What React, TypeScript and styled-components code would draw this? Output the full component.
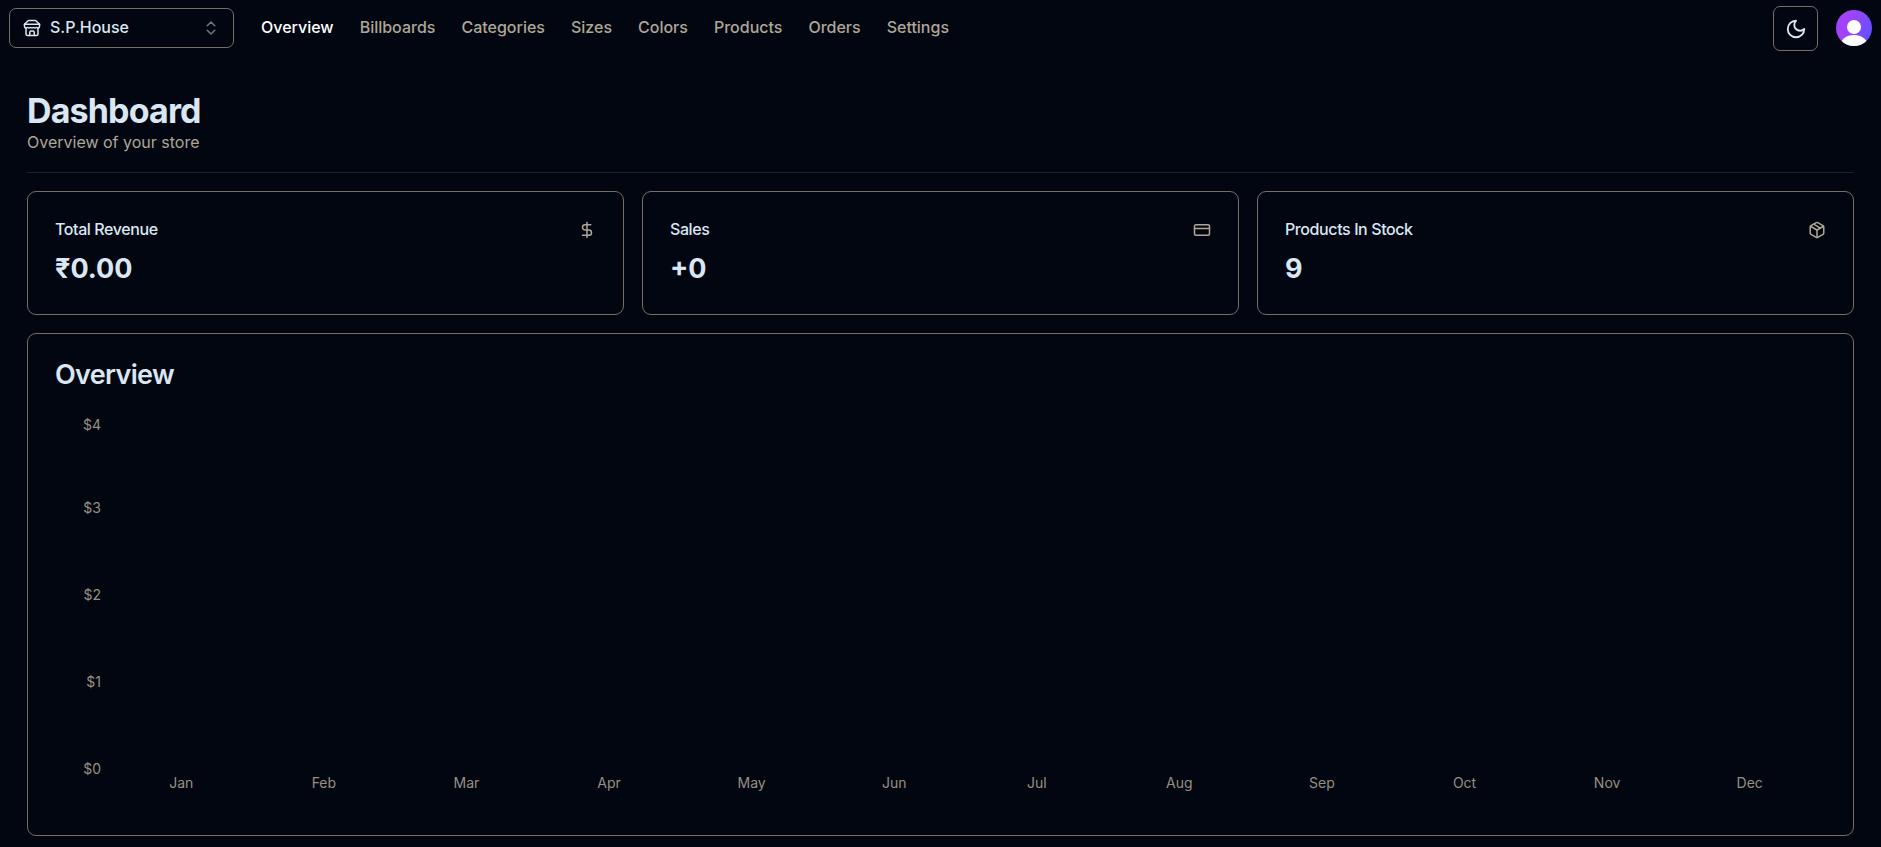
import React from "react";
import styled, { createGlobalStyle } from "styled-components";
import { ChevronsUpDown, CreditCard, DollarSign, Package } from "lucide-react";

const color = {
  background: "#020611",
  text: "#dbe6f3",
  active: "#ffffff",
  muted: "#afa696",
  axis: "#988f81",
  border: "#776e62",
  divider: "#1b1f2d",
};

const GlobalStyle = createGlobalStyle`
  *, *::before, *::after { box-sizing: border-box; }
  body {
    margin: 0;
    background: ${color.background};
    color: ${color.text};
    font-family: Inter, "Liberation Sans", sans-serif;
    font-size: 16px;
    line-height: 24px;
  }
  h1, h2, h3, p, ul, ol { margin: 0; padding: 0; }
  ul, ol { list-style: none; }
  button { font: inherit; color: inherit; background: none; cursor: pointer; }
`;

const Header = styled.header`
  display: flex;
  align-items: flex-start;
  justify-content: space-between;
  padding: 6px 9px;
`;

const HeaderStart = styled.div`
  display: flex;
  align-items: center;
  gap: 27px;
  padding-top: 2px;
`;

const StoreSwitcher = styled.button`
  display: flex;
  align-items: center;
  gap: 9px;
  width: 225px;
  height: 40px;
  padding: 0 13px;
  border: 1px solid ${color.border};
  border-radius: 7px;
  font-weight: 500;
`;

const StoreName = styled.span`
  flex: 1;
  padding-bottom: 2px;
  text-align: left;
`;

const NavList = styled.ul`
  display: flex;
  gap: 26px;
  padding-bottom: 2px;
`;

const NavLink = styled.a<{ $active?: boolean }>`
  color: ${(p) => (p.$active ? color.active : color.muted)};
  font-weight: 500;
  text-decoration: none;
`;

const Actions = styled.div`
  display: flex;
  align-items: center;
  gap: 18px;
`;

const ThemeButton = styled.button`
  display: grid;
  place-items: center;
  width: 45px;
  height: 45px;
  padding: 0;
  border: 1px solid ${color.border};
  border-radius: 7px;
`;

const AvatarButton = styled.button`
  width: 36px;
  height: 36px;
  margin-bottom: 1px;
  padding: 0;
  border: 0;
  border-radius: 50%;
  overflow: hidden;

  svg { display: block; }
`;

const Main = styled.main`
  display: flex;
  flex-direction: column;
  gap: 18px;
  padding: 34px 27px 11px;
`;

const PageTitle = styled.h1`
  font-size: 34px;
  line-height: 40px;
  font-weight: 700;
  letter-spacing: -0.025em;
`;

const Subtitle = styled.p`
  color: ${color.muted};
  line-height: 23px;
`;

const Divider = styled.hr`
  width: 100%;
  height: 1px;
  margin: 0;
  border: 0;
  background: ${color.divider};
`;

const Stats = styled.div`
  display: grid;
  grid-template-columns: repeat(3, 1fr);
  gap: 18px;
`;

const Card = styled.section`
  border: 1px solid ${color.border};
  border-radius: 9px;
`;

const StatCard = styled(Card)`
  padding: 27px;
`;

const StatHeader = styled.div`
  display: flex;
  align-items: flex-end;
  justify-content: space-between;
  height: 20px;
  margin-bottom: 12px;

  svg { color: ${color.muted}; }
`;

const StatTitle = styled.h3`
  font-size: 16px;
  line-height: 20px;
  font-weight: 500;
  letter-spacing: -0.025em;
`;

const StatValue = styled.p`
  font-size: 27px;
  line-height: 36px;
  font-weight: 700;
`;

const ChartCard = styled(Card)`
  padding: 27px 32px 43px 9px;
`;

const ChartTitle = styled.h2`
  padding-left: 18px;
  font-size: 27px;
  line-height: 27px;
  font-weight: 600;
  letter-spacing: -0.025em;
`;

const Chart = styled.div`
  display: grid;
  grid-template-columns: 73px 1fr;
  height: 376px;
  margin-top: 28px;
  color: ${color.axis};
  font-size: 14px;
  line-height: 18px;
`;

const YAxis = styled.ol`
  display: grid;
  grid-template-rows: 83fr 87fr 87fr 87fr 18px;
  padding: 0 9px 14px 0;
  text-align: right;
`;

const XAxis = styled.ol`
  display: grid;
  grid-template-columns: repeat(12, 1fr);
  align-self: end;
  text-align: center;
`;

const links = ["Overview", "Billboards", "Categories", "Sizes", "Colors", "Products", "Orders", "Settings"];
const stats = [
  { title: "Total Revenue", value: "₹0.00", Icon: DollarSign },
  { title: "Sales", value: "+0", Icon: CreditCard },
  { title: "Products In Stock", value: "9", Icon: Package },
];
const amounts = ["$4", "$3", "$2", "$1", "$0"];
const months = ["Jan", "Feb", "Mar", "Apr", "May", "Jun", "Jul", "Aug", "Sep", "Oct", "Nov", "Dec"];

const LineIcon = ({ size, paths }: { size: number; paths: string[] }) => (
  <svg
    width={size}
    height={size}
    viewBox="0 0 24 24"
    fill="none"
    stroke="currentColor"
    strokeWidth="2"
    strokeLinecap="round"
    strokeLinejoin="round"
    aria-hidden="true"
  >
    {paths.map((d) => (
      <path key={d} d={d} />
    ))}
  </svg>
);

const storePaths = [
  "m2 7 4.41-4.41A2 2 0 0 1 7.83 2h8.34a2 2 0 0 1 1.42.59L22 7",
  "M4 12v8a2 2 0 0 0 2 2h12a2 2 0 0 0 2-2v-8",
  "M15 22v-4a2 2 0 0 0-2-2h-2a2 2 0 0 0-2 2v4",
  "M2 7h20",
  "M22 7v3a2 2 0 0 1-2 2a2.7 2.7 0 0 1-1.59-.63.7.7 0 0 0-.82 0A2.7 2.7 0 0 1 16 12a2.7 2.7 0 0 1-1.59-.63.7.7 0 0 0-.82 0A2.7 2.7 0 0 1 12 12a2.7 2.7 0 0 1-1.59-.63.7.7 0 0 0-.82 0A2.7 2.7 0 0 1 8 12a2.7 2.7 0 0 1-1.59-.63.7.7 0 0 0-.82 0A2.7 2.7 0 0 1 4 12a2 2 0 0 1-2-2V7",
];
const moonPaths = ["M12 3a6 6 0 0 0 9 9 9 9 0 1 1-9-9Z"];

const Avatar = () => (
  <svg width="36" height="36" viewBox="0 0 36 36" aria-hidden="true">
    <defs>
      <linearGradient id="avatar" x1="0" y1="0.3" x2="1" y2="0.7">
        <stop offset="0.3" stopColor="#a143fb" />
        <stop offset="1" stopColor="#6151ff" />
      </linearGradient>
    </defs>
    <rect width="36" height="36" fill="url(#avatar)" />
    <circle cx="18" cy="17" r="7" fill="#fff" />
    <ellipse cx="18" cy="36" rx="14" ry="11" fill="#fff" />
  </svg>
);

export default function App() {
  return (
    <>
      <GlobalStyle />
      <Header>
        <HeaderStart>
          <StoreSwitcher type="button" aria-label="Select a store: S.P.House" aria-haspopup="listbox">
            <LineIcon size={18} paths={storePaths} />
            <StoreName>S.P.House</StoreName>
            <ChevronsUpDown size={18} opacity={0.5} />
          </StoreSwitcher>
          <nav>
            <NavList>
              {links.map((label, i) => (
                <li key={label}>
                  <NavLink href={`#${label.toLowerCase()}`} $active={i === 0}>
                    {label}
                  </NavLink>
                </li>
              ))}
            </NavList>
          </nav>
        </HeaderStart>
        <Actions>
          <ThemeButton type="button" aria-label="Toggle theme">
            <LineIcon size={22} paths={moonPaths} />
          </ThemeButton>
          <AvatarButton type="button" aria-label="Open user menu">
            <Avatar />
          </AvatarButton>
        </Actions>
      </Header>
      <Main>
        <div>
          <PageTitle>Dashboard</PageTitle>
          <Subtitle>Overview of your store</Subtitle>
        </div>
        <Divider />
        <Stats>
          {stats.map(({ title, value, Icon }) => (
            <StatCard key={title}>
              <StatHeader>
                <StatTitle>{title}</StatTitle>
                <Icon size={18} />
              </StatHeader>
              <StatValue>{value}</StatValue>
            </StatCard>
          ))}
        </Stats>
        <ChartCard>
          <ChartTitle>Overview</ChartTitle>
          <Chart>
            <YAxis>
              {amounts.map((amount) => (
                <li key={amount}>{amount}</li>
              ))}
            </YAxis>
            <XAxis>
              {months.map((month) => (
                <li key={month}>{month}</li>
              ))}
            </XAxis>
          </Chart>
        </ChartCard>
      </Main>
    </>
  );
}
